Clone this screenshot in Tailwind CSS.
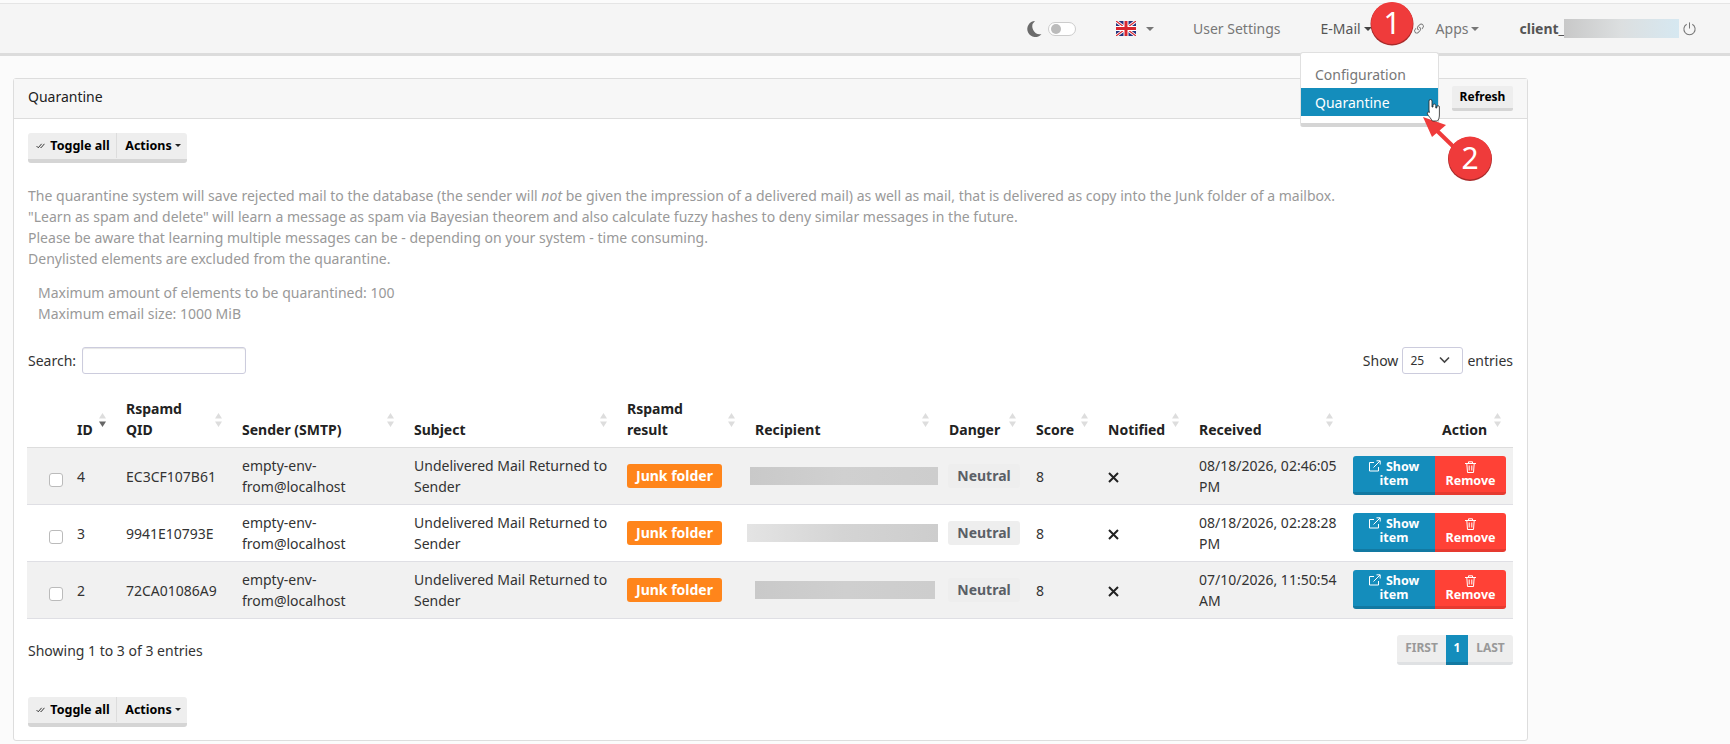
<!doctype html>
<html>
<head>
  <meta charset="UTF-8">
  <meta name="viewport" content="width=device-width, initial-scale=1.0">
  <script src="https://cdn.jsdelivr.net/npm/@tailwindcss/browser@4"></script>
</head>
<body class="relative h-[744px] overflow-hidden bg-[#fbfbfb] font-['Noto_Sans',sans-serif] text-[14px] leading-[21px] text-[#333]">

  <!-- navbar -->
  <div class="mt-[3px] flex h-[53px] items-center border-t border-b-[3px] border-t-[#e5e5e5] border-b-[#dcdcdc] bg-[#f5f5f5] text-[#777]">
    <svg class="ml-[1026px] h-[18px] w-[16px]" viewBox="0 0 16 18"><path d="M9 1A8 8 0 1 0 15.5 14 7.5 7.5 0 0 1 9 1z" fill="#6b6b6b"/></svg>
    <div class="ml-[6px] flex h-[14px] w-[28px] items-center rounded-full border border-[#ccc] bg-white pl-[2px]"><div class="h-[10px] w-[10px] rounded-full bg-[#bbb]"></div></div>
    <svg class="ml-[40px] h-[15px] w-[20px]" viewBox="0 0 20 15">
      <rect width="20" height="15" fill="#23317d"/>
      <path d="M0 0L20 15M20 0L0 15" stroke="#fff" stroke-width="3"/>
      <path d="M0 0L20 15M20 0L0 15" stroke="#d8262f" stroke-width="1.2"/>
      <path d="M10 0V15M0 7.5H20" stroke="#fff" stroke-width="5"/>
      <path d="M10 0V15M0 7.5H20" stroke="#d8262f" stroke-width="3"/>
    </svg>
    <div class="ml-[10px] h-0 w-0 border-x-[4px] border-t-[4px] border-x-transparent border-t-[#777]"></div>
    <span class="ml-[39px]">User Settings</span>
    <span class="ml-[40px] text-[#555]">E-Mail</span>
    <div class="ml-[3px] h-0 w-0 border-x-[4px] border-t-[4px] border-x-transparent border-t-[#444]"></div>
    <svg class="ml-[40px] h-[14px] w-[14px]" viewBox="0 0 16 16" fill="#777"><path d="M4.715 6.542 3.343 7.914a3 3 0 1 0 4.243 4.243l1.828-1.829A3 3 0 0 0 8.586 5.500L8 6.086a1 1 0 0 0-.154.199 2 2 0 0 1 .861 3.337L6.880 11.450a2 2 0 1 1-2.830-2.830l.793-.792a4 4 0 0 1-.128-1.287z"/><path d="M6.586 4.672A3 3 0 0 0 7.414 9.500l.775-.776a2 2 0 0 1-.896-3.346L9.120 3.550a2 2 0 1 1 2.830 2.830l-.793.792c.112.420.155.855.128 1.287l1.372-1.372a3 3 0 1 0-4.243-4.243z"/></svg>
    <span class="ml-[10px]">Apps</span>
    <div class="ml-[3px] h-0 w-0 border-x-[4px] border-t-[4px] border-x-transparent border-t-[#777]"></div>
    <span class="ml-[40px] font-bold text-[#555]">client_</span>
    <div class="h-[19px] w-[115px] bg-linear-to-r from-[#c8c8c8] via-[#dcdfe0] to-[#d6e8f1]"></div>
    <svg class="ml-[3px] h-[15px] w-[15px]" viewBox="0 0 16 16" fill="none" stroke="#777" stroke-width="1.1"><path d="M8 1.500V8"/><path d="M5 3.500a6 6 0 1 0 6 0"/></svg>
  </div>

  <!-- panel -->
  <div class="mt-[22px] ml-[13px] h-[663px] w-[1515px] rounded-[3px] border border-[#ddd] bg-white">
    <div class="flex h-[40px] items-center justify-between border-b border-[#ddd] bg-[#f7f7f7] px-[14px] text-[#222]">
      <span class="mb-[4px]">Quarantine</span>
      <div class="flex h-[25px] w-[61px] items-center justify-center rounded-[2px] border-b-[3px] border-[#d5d5d5] bg-[#eee] pb-[1px] text-[12px] font-bold text-black">Refresh</div>
    </div>

    <div class="px-[14px] pt-[14px]">
      <div class="flex h-[30px] w-[159px] rounded-[3px] border-b-[4px] border-[#d5d5d5] bg-[#eee] pb-[1px] text-[12.5px] font-bold text-black">
        <div class="flex w-[89px] items-center justify-center gap-[5px] border-r border-[#ddd] pl-[2px]">
          <svg class="h-[9px] w-[9px]" viewBox="0 0 16 16" fill="none" stroke="#222" stroke-width="1.6"><path d="M1 9l3 3 6-7"/><path d="M8 11l1 1 6-7"/></svg>
          <span>Toggle all</span>
        </div>
        <div class="flex flex-1 items-center justify-center gap-[3px] pl-[2px]">
          <span>Actions</span>
          <div class="h-0 w-0 border-x-[3px] border-t-[3px] border-x-transparent border-t-[#222]"></div>
        </div>
      </div>

      <div class="mt-[22px] tracking-[0.016px] text-[#999]">
        <p>The quarantine system will save rejected mail to the database (the sender will <i>not</i> be given the impression of a delivered mail) as well as mail, that is delivered as copy into the Junk folder of a mailbox.</p>
        <p>"Learn as spam and delete" will learn a message as spam via Bayesian theorem and also calculate fuzzy hashes to deny similar messages in the future.</p>
        <p>Please be aware that learning multiple messages can be - depending on your system - time consuming.</p>
        <p>Denylisted elements are excluded from the quarantine.</p>
      </div>
      <div class="mt-[13px] pl-[10px] text-[#999]">
        <p>Maximum amount of elements to be quarantined: 100</p>
        <p>Maximum email size: 1000 MiB</p>
      </div>

      <div class="mt-[22px] flex h-[28px] items-center justify-between">
        <div class="flex items-center gap-[6px]">
          <span>Search:</span>
          <div class="h-[27px] w-[164px] rounded-[3px] border border-[#ccd] bg-white shadow-[inset_0_1px_1px_#0000001a]"></div>
        </div>
        <div class="flex items-center gap-[4px]">
          <span>Show</span>
          <div class="flex h-[27px] w-[61px] items-center justify-between rounded-[3px] border border-[#ccd] pr-[12px] pl-[7px] text-[12px]">
            <span>25</span>
            <svg class="h-[8px] w-[11px]" viewBox="0 0 11 8" fill="none" stroke="#444" stroke-width="1.6"><path d="M1 1.500l4.500 4.500L10 1.500"/></svg>
          </div>
          <span>entries</span>
        </div>
      </div>

      <!-- table -->
      <table class="mt-[16px] -ml-[1px] w-[1486px] table-fixed border-collapse">
        <colgroup>
          <col class="w-[42px]"><col class="w-[49px]"><col class="w-[116px]"><col class="w-[172px]"><col class="w-[213px]"><col class="w-[128px]"><col class="w-[194px]"><col class="w-[87px]"><col class="w-[72px]"><col class="w-[91px]"><col class="w-[154px]"><col class="w-[168px]">
        </colgroup>
        <thead>
          <tr class="h-[57px] border-b border-[#ddd] text-left align-bottom font-bold text-[#222]">
            <th></th>
            <th class="relative px-[8px] pb-[7px]">ID<svg class="absolute top-[23px] right-[12px] h-[14px] w-[7px]" viewBox="0 0 7 14"><path d="M3.500 0L7 5.500H0z" fill="#ddd"/><path d="M3.500 14L0 8.500h7z" fill="#666"/></svg></th>
            <th class="relative px-[8px] pb-[7px]">Rspamd<br>QID<svg class="absolute top-[23px] right-[12px] h-[14px] w-[7px]" viewBox="0 0 7 14"><path d="M3.500 0L7 5.500H0zM3.500 14L0 8.500h7z" fill="#ddd"/></svg></th>
            <th class="relative px-[8px] pb-[7px]">Sender (SMTP)<svg class="absolute top-[23px] right-[12px] h-[14px] w-[7px]" viewBox="0 0 7 14"><path d="M3.500 0L7 5.500H0zM3.500 14L0 8.500h7z" fill="#ddd"/></svg></th>
            <th class="relative px-[8px] pb-[7px]">Subject<svg class="absolute top-[23px] right-[12px] h-[14px] w-[7px]" viewBox="0 0 7 14"><path d="M3.500 0L7 5.500H0zM3.500 14L0 8.500h7z" fill="#ddd"/></svg></th>
            <th class="relative px-[8px] pb-[7px]">Rspamd<br>result<svg class="absolute top-[23px] right-[12px] h-[14px] w-[7px]" viewBox="0 0 7 14"><path d="M3.500 0L7 5.500H0zM3.500 14L0 8.500h7z" fill="#ddd"/></svg></th>
            <th class="relative px-[8px] pb-[7px]">Recipient<svg class="absolute top-[23px] right-[12px] h-[14px] w-[7px]" viewBox="0 0 7 14"><path d="M3.500 0L7 5.500H0zM3.500 14L0 8.500h7z" fill="#ddd"/></svg></th>
            <th class="relative px-[8px] pb-[7px]">Danger<svg class="absolute top-[23px] right-[12px] h-[14px] w-[7px]" viewBox="0 0 7 14"><path d="M3.500 0L7 5.500H0zM3.500 14L0 8.500h7z" fill="#ddd"/></svg></th>
            <th class="relative px-[8px] pb-[7px]">Score<svg class="absolute top-[23px] right-[12px] h-[14px] w-[7px]" viewBox="0 0 7 14"><path d="M3.500 0L7 5.500H0zM3.500 14L0 8.500h7z" fill="#ddd"/></svg></th>
            <th class="relative px-[8px] pb-[7px]">Notified<svg class="absolute top-[23px] right-[12px] h-[14px] w-[7px]" viewBox="0 0 7 14"><path d="M3.500 0L7 5.500H0zM3.500 14L0 8.500h7z" fill="#ddd"/></svg></th>
            <th class="relative px-[8px] pb-[7px]">Received<svg class="absolute top-[23px] right-[12px] h-[14px] w-[7px]" viewBox="0 0 7 14"><path d="M3.500 0L7 5.500H0zM3.500 14L0 8.500h7z" fill="#ddd"/></svg></th>
            <th class="relative pr-[26px] pb-[7px] pl-[8px] text-right">Action<svg class="absolute top-[23px] right-[12px] h-[14px] w-[7px]" viewBox="0 0 7 14"><path d="M3.500 0L7 5.500H0zM3.500 14L0 8.500h7z" fill="#ddd"/></svg></th>
          </tr>
        </thead>
        <tbody>
          <tr class="h-[57px] border-b border-[#dfdfe4] bg-[#f1f1f1]">
            <td class="pl-[22px]"><div class="mt-[9px] h-[14px] w-[14px] rounded-[3px] border border-[#bbb] bg-white"></div></td>
            <td class="px-[8px] pt-[2px]">4</td>
            <td class="px-[8px] pt-[2px]">EC3CF107B61</td>
            <td class="px-[8px]">empty-env-<br>from@localhost</td>
            <td class="px-[8px]">Undelivered Mail Returned to Sender</td>
            <td class="px-[8px]"><div class="flex h-[24px] w-[95px] items-center justify-center rounded-[3px] bg-[#ff851b] font-bold text-white">Junk folder</div></td>
            <td><div class="ml-[3px] h-[18px] w-[188px] bg-linear-to-r from-[#c9c9c9] via-[#d0d0d0] to-[#cdcdcd]"></div></td>
            <td class="pl-[7px]"><div class="flex h-[24px] w-[72px] items-center justify-center rounded-[3px] bg-[#eee] font-bold text-[#5a5f66]">Neutral</div></td>
            <td class="px-[8px] pt-[2px]">8</td>
            <td class="px-[8px] pt-[3px]"><svg class="h-[11px] w-[11px]" viewBox="0 0 11 11" stroke="#222" stroke-width="2"><path d="M1 1l9 9M10 1l-9 9"/></svg></td>
            <td class="px-[8px]">08/18/2026, 02:46:05 PM</td>
            <td class="pl-[8px]">
              <div class="flex h-[39px] w-[153px] text-[12.5px] leading-[14px] font-bold text-white">
                <div class="w-[82px] rounded-l-[3px] border-b-[3px] border-[#1279a2] bg-[#148dbc] pt-[4px] text-center">
                  <svg class="mr-[2px] inline h-[12px] w-[12px] align-[-1px]" viewBox="0 0 12 12" fill="none" stroke="#fff"><path d="M9.500 7v4h-9V2.500h4.500"/><path d="M4.500 7.500L11 1M7.500 .8h3.700v3.700"/></svg> Show<br>item
                </div>
                <div class="w-[71px] rounded-r-[3px] border-b-[3px] border-[#e63a30] bg-[#ff4136] pt-[5px] text-center">
                  <svg class="mx-auto mb-[1px] h-[12px] w-[11px]" viewBox="0 0 11 12" fill="none" stroke="#fff"><path d="M0 2.500h11M3.500 2.500V.8h4v1.700M1.800 2.500l.7 9h6l.7-9M4.200 4.500v5M6.800 4.500v5"/></svg>
                  Remove
                </div>
              </div>
            </td>
          </tr>
          <tr class="h-[57px] border-b border-[#dfdfe4] bg-white">
            <td class="pl-[22px]"><div class="mt-[9px] h-[14px] w-[14px] rounded-[3px] border border-[#bbb] bg-white"></div></td>
            <td class="px-[8px] pt-[2px]">3</td>
            <td class="px-[8px] pt-[2px]">9941E10793E</td>
            <td class="px-[8px]">empty-env-<br>from@localhost</td>
            <td class="px-[8px]">Undelivered Mail Returned to Sender</td>
            <td class="px-[8px]"><div class="flex h-[24px] w-[95px] items-center justify-center rounded-[3px] bg-[#ff851b] font-bold text-white">Junk folder</div></td>
            <td><div class="h-[18px] w-[191px] bg-linear-to-r from-[#e4e4e4] via-[#d4d4d4] to-[#cdcdcd]"></div></td>
            <td class="pl-[7px]"><div class="flex h-[24px] w-[72px] items-center justify-center rounded-[3px] bg-[#eee] font-bold text-[#5a5f66]">Neutral</div></td>
            <td class="px-[8px] pt-[2px]">8</td>
            <td class="px-[8px] pt-[3px]"><svg class="h-[11px] w-[11px]" viewBox="0 0 11 11" stroke="#222" stroke-width="2"><path d="M1 1l9 9M10 1l-9 9"/></svg></td>
            <td class="px-[8px]">08/18/2026, 02:28:28 PM</td>
            <td class="pl-[8px]">
              <div class="flex h-[39px] w-[153px] text-[12.5px] leading-[14px] font-bold text-white">
                <div class="w-[82px] rounded-l-[3px] border-b-[3px] border-[#1279a2] bg-[#148dbc] pt-[4px] text-center">
                  <svg class="mr-[2px] inline h-[12px] w-[12px] align-[-1px]" viewBox="0 0 12 12" fill="none" stroke="#fff"><path d="M9.500 7v4h-9V2.500h4.500"/><path d="M4.500 7.500L11 1M7.500 .8h3.700v3.700"/></svg> Show<br>item
                </div>
                <div class="w-[71px] rounded-r-[3px] border-b-[3px] border-[#e63a30] bg-[#ff4136] pt-[5px] text-center">
                  <svg class="mx-auto mb-[1px] h-[12px] w-[11px]" viewBox="0 0 11 12" fill="none" stroke="#fff"><path d="M0 2.500h11M3.500 2.500V.8h4v1.700M1.800 2.500l.7 9h6l.7-9M4.200 4.500v5M6.800 4.500v5"/></svg>
                  Remove
                </div>
              </div>
            </td>
          </tr>
          <tr class="h-[57px] border-b border-[#dfdfe4] bg-[#f1f1f1]">
            <td class="pl-[22px]"><div class="mt-[9px] h-[14px] w-[14px] rounded-[3px] border border-[#bbb] bg-white"></div></td>
            <td class="px-[8px] pt-[2px]">2</td>
            <td class="px-[8px] pt-[2px]">72CA01086A9</td>
            <td class="px-[8px]">empty-env-<br>from@localhost</td>
            <td class="px-[8px]">Undelivered Mail Returned to Sender</td>
            <td class="px-[8px]"><div class="flex h-[24px] w-[95px] items-center justify-center rounded-[3px] bg-[#ff851b] font-bold text-white">Junk folder</div></td>
            <td><div class="ml-[8px] h-[18px] w-[180px] bg-linear-to-r from-[#c9c9c9] via-[#cfcfcf] to-[#cdcdcd]"></div></td>
            <td class="pl-[7px]"><div class="flex h-[24px] w-[72px] items-center justify-center rounded-[3px] bg-[#eee] font-bold text-[#5a5f66]">Neutral</div></td>
            <td class="px-[8px] pt-[2px]">8</td>
            <td class="px-[8px] pt-[3px]"><svg class="h-[11px] w-[11px]" viewBox="0 0 11 11" stroke="#222" stroke-width="2"><path d="M1 1l9 9M10 1l-9 9"/></svg></td>
            <td class="px-[8px]">07/10/2026, 11:50:54 AM</td>
            <td class="pl-[8px]">
              <div class="flex h-[39px] w-[153px] text-[12.5px] leading-[14px] font-bold text-white">
                <div class="w-[82px] rounded-l-[3px] border-b-[3px] border-[#1279a2] bg-[#148dbc] pt-[4px] text-center">
                  <svg class="mr-[2px] inline h-[12px] w-[12px] align-[-1px]" viewBox="0 0 12 12" fill="none" stroke="#fff"><path d="M9.500 7v4h-9V2.500h4.500"/><path d="M4.500 7.500L11 1M7.500 .8h3.700v3.700"/></svg> Show<br>item
                </div>
                <div class="w-[71px] rounded-r-[3px] border-b-[3px] border-[#e63a30] bg-[#ff4136] pt-[5px] text-center">
                  <svg class="mx-auto mb-[1px] h-[12px] w-[11px]" viewBox="0 0 11 12" fill="none" stroke="#fff"><path d="M0 2.500h11M3.500 2.500V.8h4v1.700M1.800 2.500l.7 9h6l.7-9M4.200 4.500v5M6.800 4.500v5"/></svg>
                  Remove
                </div>
              </div>
            </td>
          </tr>
        </tbody>
      </table>

      <div class="mt-[16px] flex items-center justify-between">
        <span class="mt-[2px]">Showing 1 to 3 of 3 entries</span>
        <div class="flex h-[30px] text-[12px] font-bold text-[#999]">
          <div class="flex w-[49px] items-center justify-center rounded-l-[3px] border-b-[3px] border-[#dfe1e3] bg-[#eee] pb-[1px]">FIRST</div>
          <div class="flex w-[22px] items-center justify-center border-b-[3px] border-[#1279a2] bg-[#148dbc] pb-[1px] text-white">1</div>
          <div class="flex w-[45px] items-center justify-center rounded-r-[3px] border-b-[3px] border-[#dfe1e3] bg-[#eee] pb-[1px]">LAST</div>
        </div>
      </div>

      <div class="mt-[32px] flex h-[30px] w-[159px] rounded-[3px] border-b-[4px] border-[#d5d5d5] bg-[#eee] pb-[1px] text-[12.5px] font-bold text-black">
        <div class="flex w-[89px] items-center justify-center gap-[5px] border-r border-[#ddd] pl-[2px]">
          <svg class="h-[9px] w-[9px]" viewBox="0 0 16 16" fill="none" stroke="#222" stroke-width="1.6"><path d="M1 9l3 3 6-7"/><path d="M8 11l1 1 6-7"/></svg>
          <span>Toggle all</span>
        </div>
        <div class="flex flex-1 items-center justify-center gap-[3px] pl-[2px]">
          <span>Actions</span>
          <div class="h-0 w-0 border-x-[3px] border-t-[3px] border-x-transparent border-t-[#222]"></div>
        </div>
      </div>
    </div>
  </div>

  <!-- open dropdown -->
  <div class="absolute top-[52px] left-[1300px] w-[139px] rounded-[3px] border border-b-[4px] border-[#e0e0e0] border-b-[#d5d5d5] bg-white py-[7px] text-[#777]">
    <div class="flex h-[28px] items-center pl-[14px]">Configuration</div>
    <div class="flex h-[28px] items-center bg-[#148dbc] pl-[14px] text-white">Quarantine</div>
  </div>

  <!-- screenshot annotations -->
  <svg class="absolute top-[0px] left-[1370px] h-[190px] w-[140px]" viewBox="0 0 140 190">
    <path d="M58 122L92 155" stroke="#ef3b3b" stroke-width="4"/>
    <path d="M53 117L76 125L62 137z" fill="#ef3b3b"/>
    <circle cx="22" cy="24" r="21.500" fill="#a92a2a"/>
    <circle cx="22" cy="23" r="21" fill="#ef3b3b"/>
    <circle cx="100" cy="159" r="22" fill="#a92a2a"/>
    <circle cx="100" cy="158" r="21.500" fill="#ef3b3b"/>
    <path d="M59 110V101a1.500 1.500 0 0 1 3 0v6h1v-1.500a1.400 1.400 0 0 1 2.800 0V108h1v-1a1.300 1.300 0 0 1 2.600 0v8c0 3-1 5-2 6h-5c-1-2-4-5-5-7-.6-1.500.8-2.500 2-1.500z" fill="#fff" stroke="#222" stroke-width=".8"/>
  </svg>
  <span class="absolute top-[2px] left-[1381px] w-[22px] text-center text-[30px] leading-[42px] text-white">1</span>
  <span class="absolute top-[137px] left-[1459px] w-[22px] text-center text-[30px] leading-[42px] text-white">2</span>
</body>
</html>
